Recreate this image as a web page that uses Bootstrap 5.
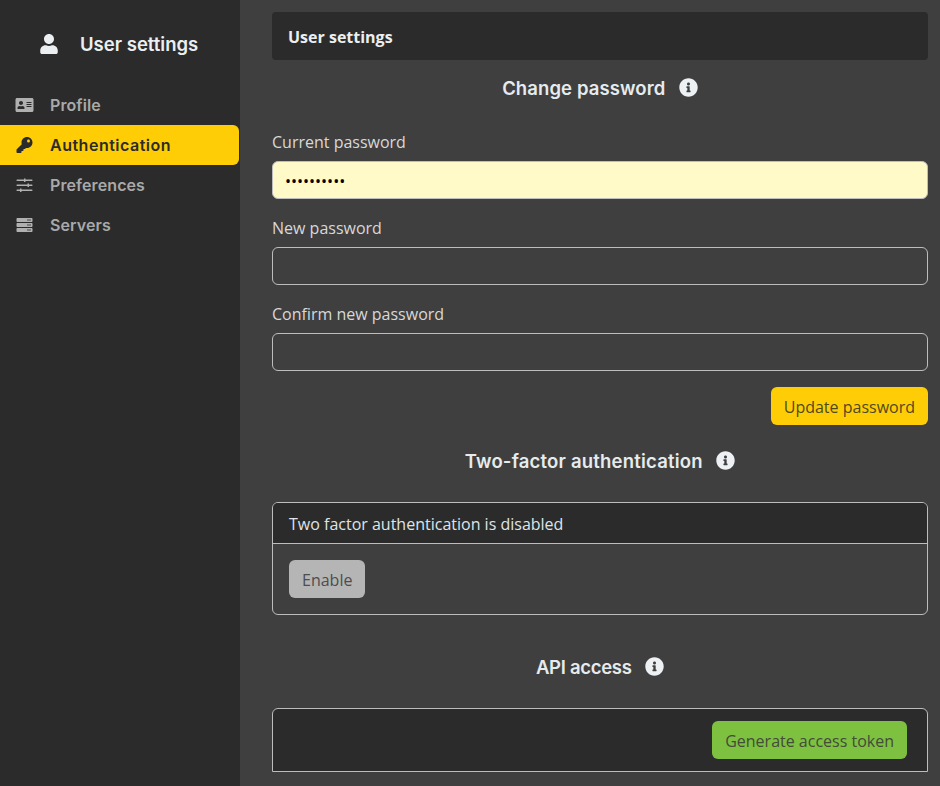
<!DOCTYPE html>
<html lang="en">
<head>
<meta charset="utf-8">
<title>User settings</title>
<link rel="stylesheet" href="https://cdn.jsdelivr.net/npm/bootstrap@5.3.0/dist/css/bootstrap.min.css">
<style>
html, body { height: 100%; overflow: hidden; }
body { background: #3f3f3f; color: #e4e4e4; font-family: "Open Sans", sans-serif; font-size: 16px; }
.app-shell { height: 786px; }
.side-rail { width: 240px; flex: none; background: #2b2b2b; padding-top: 32px; }
.rail-title { height: 24px; margin-bottom: 29px; padding-left: 40px; font-family: Inter, sans-serif; font-weight: 600; font-size: 18.5px; color: #eceff1; line-height: 26px; }
.rail-title svg { width: 18px; height: 20px; margin-right: 22px; fill: #eceff1; }
.rail-link { display: flex; align-items: center; height: 40px; width: 239px; padding: 0 0 0 15px; border-radius: 0 6px 6px 0; font-family: Inter, sans-serif; font-weight: 600; font-size: 16px; letter-spacing: .1px; color: #a9a9a9; text-decoration: none; }
.rail-link svg { width: 19px; height: 16px; margin-right: 16px; fill: #b0b0b0; flex: none; }
.rail-link.rail-on { background: #ffcd05; color: #2b2b2b; letter-spacing: .5px; }
.rail-link.rail-on svg { fill: #2b2b2b; }
.main-pane { flex: 1; padding: 12px 12px 0 32px; min-width: 0; }
.pane-head { height: 48px; background: #2b2b2b; border-radius: 4px; padding: 0 16px; line-height: 50px; font-weight: 700; color: #eceff1; }
.sect-title { height: 24px; margin: 16px 0 29px; line-height: 24px; font-family: Inter, sans-serif; font-weight: 600; font-size: 18.5px; letter-spacing: .1px; color: #e6ebee; }
.sect-title svg { width: 19px; height: 19px; margin-left: 13.5px; fill: #eef1f4; vertical-align: -2px; }
.sect-wide { letter-spacing: .2px; }
.sect-tight { letter-spacing: -.3px; }
.sect-gap { margin-top: 24px; }
.sect-gap-lg { margin-top: 40px; }
.field-label { margin-bottom: 7px; padding-top: 1px; color: #d8d8d8; }
.field-input, .field-input:focus { height: 38px; padding-top: 8px; padding-bottom: 6px; background: transparent; border: 1px solid #bdbdbd; border-radius: 6px; color: #000; box-shadow: none; }
.field-filled, .field-filled:focus { background: #fffac8; }
.act-btn { height: 38px; border: 0; border-radius: 6px; padding: 1px 13px 0; font-size: 16px; line-height: 38px; color: #595959; }
.act-yellow, .act-yellow:hover { background: #ffcd05; color: #4f4a1e; }
.act-grey, .act-grey:hover, .act-grey:disabled { background: #b5b5b5; color: #4d4d4d; opacity: 1; }
.act-green, .act-green:hover { background: #7ec141; color: #434b39; }
.box-card { background: transparent; border: 1px solid #bdbdbd; border-radius: 6px; color: #e4e4e4; }
.box-card .card-header { height: 41px; padding: 9px 16px 7px; background: #2b2b2b; border-bottom: 1px solid #bdbdbd; line-height: 24px; color: #dfe4e8; }
.box-card .card-body { padding: 16px; height: 70px; }
.token-card { height: 64px; background: #2b2b2b; padding: 12px 20px; border-radius: 6px 6px 0 0; }
</style>
</head>
<body>
<div class="d-flex app-shell">
  <aside class="side-rail">
    <div class="rail-title d-flex align-items-center">
      <svg viewBox="0 0 448 512"><path d="M224 256c70.700 0 128-57.300 128-128S294.700 0 224 0 96 57.300 96 128s57.300 128 128 128zm89.600 32h-16.700c-22.200 10.200-46.900 16-72.900 16s-50.600-5.800-72.900-16h-16.700C60.200 288 0 348.200 0 422.400V464c0 26.500 21.500 48 48 48h352c26.500 0 48-21.500 48-48v-41.600c0-74.200-60.200-134.400-134.400-134.400z"/></svg>
      <span>User settings</span>
    </div>
    <nav class="nav flex-column">
      <a class="rail-link" href="#"><svg viewBox="0 0 576 512"><path d="M528 32H48C21.5 32 0 53.5 0 80v352c0 26.5 21.5 48 48 48h480c26.5 0 48-21.5 48-48V80c0-26.5-21.5-48-48-48zm-352 96c35.3 0 64 28.7 64 64s-28.7 64-64 64-64-28.7-64-64 28.7-64 64-64zm112 236.8c0 10.6-10 19.2-22.4 19.2H86.4C74 384 64 375.4 64 364.8v-19.2c0-31.8 30.1-57.6 67.2-57.6h5c12.3 5.1 25.7 8 39.8 8s27.6-2.9 39.8-8h5c37.1 0 67.2 25.8 67.2 57.6v19.2zM512 312c0 4.4-3.6 8-8 8H360c-4.4 0-8-3.6-8-8v-16c0-4.4 3.6-8 8-8h144c4.4 0 8 3.6 8 8v16zm0-64c0 4.4-3.6 8-8 8H360c-4.4 0-8-3.6-8-8v-16c0-4.4 3.6-8 8-8h144c4.4 0 8 3.6 8 8v16zm0-64c0 4.4-3.6 8-8 8H360c-4.4 0-8-3.6-8-8v-16c0-4.4 3.6-8 8-8h144c4.4 0 8 3.6 8 8v16z"/></svg>Profile</a>
      <a class="rail-link rail-on" href="#"><svg viewBox="0 0 512 512"><path d="M512 176.001C512 273.203 433.202 352 336 352c-11.22 0-22.19-1.062-32.827-3.069l-24.012 27.014A23.999 23.999 0 0 1 261.223 384H224v40c0 13.255-10.745 24-24 24h-40v40c0 13.255-10.745 24-24 24H24c-13.255 0-24-10.745-24-24v-78.059c0-6.365 2.529-12.47 7.029-16.971l161.802-161.802C163.108 213.814 160 195.271 160 176 160 78.798 238.797.001 335.999 0 433.488-.001 512 78.511 512 176.001zM336 128c0 26.51 21.49 48 48 48s48-21.49 48-48-21.49-48-48-48-48 21.49-48 48z"/></svg>Authentication</a>
      <a class="rail-link" href="#"><svg viewBox="0 0 512 512"><path d="M496 400H160v-24c0-4.400-3.600-8-8-8h-32c-4.400 0-8 3.600-8 8v24H16c-8.800 0-16 7.200-16 16v16c0 8.800 7.200 16 16 16h96v24c0 4.400 3.600 8 8 8h32c4.400 0 8-3.600 8-8v-24h336c8.800 0 16-7.200 16-16v-16c0-8.800-7.200-16-16-16zm0-160h-96v-24c0-4.400-3.600-8-8-8h-32c-4.400 0-8 3.600-8 8v24H16c-8.800 0-16 7.200-16 16v16c0 8.800 7.200 16 16 16h336v24c0 4.400 3.600 8 8 8h32c4.400 0 8-3.600 8-8v-24h96c8.800 0 16-7.200 16-16v-16c0-8.800-7.200-16-16-16zm0-160H288V56c0-4.400-3.600-8-8-8h-32c-4.400 0-8 3.600-8 8v24H16C7.200 80 0 87.200 0 96v16c0 8.800 7.200 16 16 16h224v24c0 4.400 3.600 8 8 8h32c4.400 0 8-3.600 8-8v-24h208c8.800 0 16-7.200 16-16V96c0-8.800-7.200-16-16-16z"/></svg>Preferences</a>
      <a class="rail-link" href="#"><svg viewBox="0 0 512 512"><path d="M480 160H32c-17.673 0-32-14.327-32-32V64c0-17.673 14.327-32 32-32h448c17.673 0 32 14.327 32 32v64c0 17.673-14.327 32-32 32zm-48-88c-13.255 0-24 10.745-24 24s10.745 24 24 24 24-10.745 24-24-10.745-24-24-24zm-64 0c-13.255 0-24 10.745-24 24s10.745 24 24 24 24-10.745 24-24-10.745-24-24-24zm112 248H32c-17.673 0-32-14.327-32-32v-64c0-17.673 14.327-32 32-32h448c17.673 0 32 14.327 32 32v64c0 17.673-14.327 32-32 32zm-48-88c-13.255 0-24 10.745-24 24s10.745 24 24 24 24-10.745 24-24-10.745-24-24-24zm-64 0c-13.255 0-24 10.745-24 24s10.745 24 24 24 24-10.745 24-24-10.745-24-24-24zm112 248H32c-17.673 0-32-14.327-32-32v-64c0-17.673 14.327-32 32-32h448c17.673 0 32 14.327 32 32v64c0 17.673-14.327 32-32 32zm-48-88c-13.255 0-24 10.745-24 24s10.745 24 24 24 24-10.745 24-24-10.745-24-24-24zm-64 0c-13.255 0-24 10.745-24 24s10.745 24 24 24 24-10.745 24-24-10.745-24-24-24z"/></svg>Servers</a>
    </nav>
  </aside>
  <main class="main-pane">
    <div class="pane-head">User settings</div>
    <div class="sect-title text-center">Change password<svg viewBox="0 0 512 512"><path d="M256 8C119.043 8 8 119.083 8 256c0 136.997 111.043 248 248 248s248-111.003 248-248C504 119.083 392.957 8 256 8zm0 110c23.196 0 42 18.804 42 42s-18.804 42-42 42-42-18.804-42-42 18.804-42 42-42zm56 254c0 6.627-5.373 12-12 12h-88c-6.627 0-12-5.373-12-12v-24c0-6.627 5.373-12 12-12h12v-64h-12c-6.627 0-12-5.373-12-12v-24c0-6.627 5.373-12 12-12h64c6.627 0 12 5.373 12 12v100h12c6.627 0 12 5.373 12 12v24z"/></svg></div>
    <form>
      <div class="mb-3">
        <label class="form-label field-label" for="cur">Current password</label>
        <input class="form-control field-input field-filled" id="cur" type="password" value="**********">
      </div>
      <div class="mb-3">
        <label class="form-label field-label" for="new">New password</label>
        <input class="form-control field-input" id="new" type="password">
      </div>
      <div class="mb-3">
        <label class="form-label field-label" for="conf">Confirm new password</label>
        <input class="form-control field-input" id="conf" type="password">
      </div>
      <div class="d-flex justify-content-end">
        <button type="button" class="btn act-btn act-yellow">Update password</button>
      </div>
    </form>
    <div class="sect-title sect-wide sect-gap text-center">Two-factor authentication<svg viewBox="0 0 512 512"><path d="M256 8C119.043 8 8 119.083 8 256c0 136.997 111.043 248 248 248s248-111.003 248-248C504 119.083 392.957 8 256 8zm0 110c23.196 0 42 18.804 42 42s-18.804 42-42 42-42-18.804-42-42 18.804-42 42-42zm56 254c0 6.627-5.373 12-12 12h-88c-6.627 0-12-5.373-12-12v-24c0-6.627 5.373-12 12-12h12v-64h-12c-6.627 0-12-5.373-12-12v-24c0-6.627 5.373-12 12-12h64c6.627 0 12 5.373 12 12v100h12c6.627 0 12 5.373 12 12v24z"/></svg></div>
    <div class="card box-card">
      <div class="card-header">Two factor authentication is disabled</div>
      <div class="card-body"><button type="button" class="btn act-btn act-grey" disabled>Enable</button></div>
    </div>
    <div class="sect-title sect-tight sect-gap-lg text-center">API access<svg viewBox="0 0 512 512"><path d="M256 8C119.043 8 8 119.083 8 256c0 136.997 111.043 248 248 248s248-111.003 248-248C504 119.083 392.957 8 256 8zm0 110c23.196 0 42 18.804 42 42s-18.804 42-42 42-42-18.804-42-42 18.804-42 42-42zm56 254c0 6.627-5.373 12-12 12h-88c-6.627 0-12-5.373-12-12v-24c0-6.627 5.373-12 12-12h12v-64h-12c-6.627 0-12-5.373-12-12v-24c0-6.627 5.373-12 12-12h64c6.627 0 12 5.373 12 12v100h12c6.627 0 12 5.373 12 12v24z"/></svg></div>
    <div class="card box-card token-card d-flex flex-row justify-content-end">
      <button type="button" class="btn act-btn act-green">Generate access token</button>
    </div>
  </main>
</div>
<script src="https://cdn.jsdelivr.net/npm/bootstrap@5.3.0/dist/js/bootstrap.bundle.min.js"></script>
</body>
</html>
